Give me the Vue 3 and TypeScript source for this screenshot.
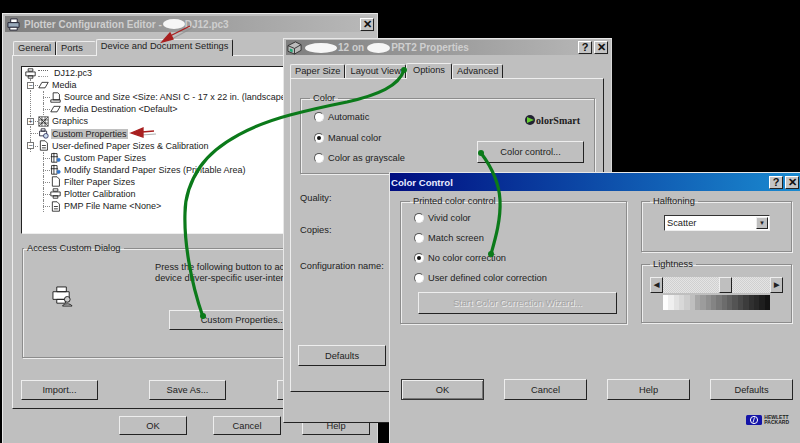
<script setup lang="ts">
interface TreeRow {
  label: string
  indent: number
  icon: string
  box?: string
  selected?: boolean
  through?: boolean
}

const treeRows: TreeRow[] = [
  { label: 'DJ12.pc3', indent: 0, icon: 'printer' },
  { label: 'Media', indent: 1, icon: 'sheet', box: '−' },
  { label: 'Source and Size <Size: ANSI C - 17 x 22 in. (landscape)', indent: 2, icon: 'tray', through: true },
  { label: 'Media Destination <Default>', indent: 2, icon: 'sheet', through: true },
  { label: 'Graphics', indent: 1, icon: 'grid', box: '+' },
  { label: 'Custom Properties', indent: 1, icon: 'custom', selected: true },
  { label: 'User-defined Paper Sizes & Calibration', indent: 1, icon: 'doc', box: '−' },
  { label: 'Custom Paper Sizes', indent: 2, icon: 'size' },
  { label: 'Modify Standard Paper Sizes (Printable Area)', indent: 2, icon: 'size' },
  { label: 'Filter Paper Sizes', indent: 2, icon: 'page' },
  { label: 'Plotter Calibration', indent: 2, icon: 'printer' },
  { label: 'PMP File Name <None>', indent: 2, icon: 'doc' },
]

const colorModes = [
  { label: 'Automatic', on: false },
  { label: 'Manual color', on: true },
  { label: 'Color as grayscale', on: false },
]
const corrections = [
  { label: 'Vivid color', on: false },
  { label: 'Match screen', on: false },
  { label: 'No color correction', on: true },
  { label: 'User defined color correction', on: false },
]
const ramp = ['#fdfdfd', '#efefef', '#e2e2e2', '#d8d8d8', '#cdcdcd', '#bfbfbf', '#a8a8a8', '#9c9c9c', '#909090', '#848484', '#787878', '#6c6c6c', '#606060', '#545454', '#484848', '#3c3c3c', '#303030', '#282828', '#1e1e1e', '#141414']
</script>

<template>
  <div class="desktop">
    <!-- back window -->
    <section class="win win-editor">
      <header class="title inactive">
        <svg class="title-icon" viewBox="0 0 14 14"><path d="M4 1h7v4H4z" fill="#fff" stroke="#223"/><path d="M1 5h12v5H1z" fill="#9ab" stroke="#223"/><path d="M3 10h8v3H3z" fill="#fff" stroke="#223"/></svg>
        <span>Plotter Configuration Editor -</span><i class="blot b1"></i><span class="after-blot">DJ12.pc3</span>
        <span class="title-btns"><b class="cap">✕</b></span>
      </header>
      <nav class="tabs">
        <span class="tab">General</span>
        <span class="tab">Ports</span>
        <span class="tab active">Device and Document Settings</span>
      </nav>
      <div class="panel">
        <ul class="tree">
          <li v-for="row in treeRows" :key="row.label" class="tree-row" :class="[`lvl${row.indent}`, { through: row.through }]">
            <span v-if="row.box" class="box">{{ row.box }}</span>
            <svg class="tree-icon" viewBox="0 0 14 14" fill="#fff" stroke="#111">
              <template v-if="row.icon === 'printer'"><path d="M4 1h6v3H4zM1 5h12v5H1zM4 10h6v3H4z"/></template>
              <template v-else-if="row.icon === 'sheet'"><path d="M5 3h8L9 10H1z"/></template>
              <template v-else-if="row.icon === 'tray'"><path d="M4 1h6l2 2v7H4zM1 10h12v3H1z"/></template>
              <template v-else-if="row.icon === 'grid'"><path d="M1 1h12v12H1zM1 1l12 12M13 1L1 13M5 1v12M9 1v12M1 5h12M1 9h12" stroke-width=".8"/></template>
              <template v-else-if="row.icon === 'custom'"><path d="M2 4h9v6H2zM4 1h5v3H4z" stroke="#112"/><circle cx="10" cy="10" r="3" fill="#cde" stroke="#225"/></template>
              <template v-else-if="row.icon === 'doc'"><path d="M3 1h6l3 3v9H3zM5 7h5M5 10h5"/></template>
              <template v-else-if="row.icon === 'size'"><path d="M2 2h7v11H2zM5 1v12M1 6h9"/><circle cx="11" cy="10" r="2" fill="#37c" stroke="#37c"/></template>
              <template v-else><path d="M3 1h6l3 3v9H3z"/></template>
            </svg>
            <i v-if="row.indent === 0" class="smudge"></i>
            <span class="tree-label" :class="{ selected: row.selected }">{{ row.label }}</span>
          </li>
        </ul>
        <fieldset class="group access">
          <legend>Access Custom Dialog</legend>
          <div class="access-body">
            <svg class="access-icon" viewBox="0 0 22 22" fill="#fff" stroke="#222"><path d="M5 1h10v5H5zM1 6h17v8H1zM5 14h9v4H5z"/><circle cx="16" cy="14" r="3" fill="#ccc"/><path d="M11 21c1-3 9-3 10 0z" fill="#ccc"/></svg>
            <div class="access-main">
              <p>Press the following button to access<br>device driver-specific user-interface</p>
              <button class="btn custom-btn">Custom Properties...</button>
            </div>
          </div>
        </fieldset>
        <div class="editor-row">
          <button class="btn">Import...</button>
          <button class="btn">Save As...</button>
          <button class="btn">Defaults</button>
        </div>
      </div>
      <footer class="editor-foot">
        <button class="btn">OK</button>
        <button class="btn">Cancel</button>
        <button class="btn">Help</button>
      </footer>
    </section>

    <!-- middle window -->
    <section class="win win-props">
      <header class="title inactive">
        <svg class="title-icon" viewBox="0 0 16 16"><path d="M1 6l8-4 6 3v6l-7 4-7-3z" fill="#bbb" stroke="#333"/><path d="M1 6l7 3 7-4M8 9v6" fill="none" stroke="#333"/><path d="M3 9l3 1v3l-3-1z" fill="#2a7"/></svg>
        <i class="blot b2"></i><span class="tight">12 on</span><i class="blot b3"></i><span class="tight">PRT2 Properties</span>
        <span class="title-btns"><b class="cap">?</b><b class="cap">✕</b></span>
      </header>
      <nav class="tabs">
        <span class="tab">Paper Size</span>
        <span class="tab">Layout View</span>
        <span class="tab active">Options</span>
        <span class="tab">Advanced</span>
      </nav>
      <div class="panel">
        <fieldset class="group color-group">
          <legend>Color</legend>
          <div class="color-body">
            <div class="radios">
              <label v-for="m in colorModes" :key="m.label" class="radio"><i class="dot" :class="{ on: m.on }"></i>{{ m.label }}</label>
            </div>
            <div class="color-side">
              <div class="smart"><svg viewBox="0 0 12 12"><circle cx="6" cy="6" r="5" fill="#223"/><path d="M3 3l7 3-7 3z" fill="#6c3"/></svg><span>olorSmart</span></div>
              <button class="btn color-btn">Color control...</button>
            </div>
          </div>
        </fieldset>
        <div class="form-labels">
          <span>Quality:</span>
          <span>Copies:</span>
          <span>Configuration name:</span>
        </div>
        <button class="btn props-default">Defaults</button>
      </div>
    </section>

    <!-- front window -->
    <section class="win win-color">
      <header class="title active-title">
        <span>Color Control</span>
        <span class="title-btns"><b class="cap">?</b><b class="cap">✕</b></span>
      </header>
      <div class="color-top">
        <fieldset class="group printed">
          <legend>Printed color control</legend>
          <label v-for="c in corrections" :key="c.label" class="radio"><i class="dot" :class="{ on: c.on }"></i>{{ c.label }}</label>
          <button class="btn wizard" disabled>Start Color Correction Wizard...</button>
        </fieldset>
        <div class="color-right">
          <fieldset class="group half">
            <legend>Halftoning</legend>
            <div class="select"><span>Scatter</span><b class="arrow">▼</b></div>
          </fieldset>
          <fieldset class="group light">
            <legend>Lightness</legend>
            <div class="scroll"><b class="sb">◀</b><div class="track"><i class="thumb"></i></div><b class="sb">▶</b></div>
            <div class="ramp"><i v-for="(c, i) in ramp" :key="i" :style="{ background: c }"></i></div>
          </fieldset>
        </div>
      </div>
      <div class="color-buttons">
        <button class="btn default">OK</button>
        <button class="btn">Cancel</button>
        <button class="btn">Help</button>
        <button class="btn">Defaults</button>
      </div>
      <div class="hp">
        <svg viewBox="0 0 16 10"><rect width="16" height="10" rx="1.5" fill="#1414a8"/><circle cx="8" cy="5" r="3.6" fill="none" stroke="#fff"/><path d="M7 7.5l1.5-5" stroke="#fff" stroke-width=".9"/></svg>
        <span>HEWLETT<br>PACKARD</span>
      </div>
    </section>

    <!-- annotations over everything -->
    <svg class="notes" viewBox="0 0 800 443">
      <g fill="none" stroke="#0b7a1a" stroke-width="3.2" stroke-linecap="round">
        <path d="M404 70C399 86 378 95 347 102C327 106 309 110 290 115C256 124 218 141 200 167C190 182 185 198 185 213C184 240 190 280 203 317"/>
        <path d="M481 153C490 165 499 180 500 200C501 220 495 240 491 254"/>
      </g>
      <g fill="#0b7a1a"><circle cx="404" cy="70" r="3"/><circle cx="481" cy="153" r="3"/><circle cx="491" cy="254" r="3"/><circle cx="203" cy="316" r="3"/></g>
      <g fill="none" stroke="#8e8e8e" stroke-width="1.2" opacity=".7">
        <path d="M170 40L192 28"/>
        <path d="M141 135L156 134"/>
      </g>
      <g fill="#a81f1f" stroke="#a81f1f" stroke-width="1.3">
        <path d="M168 37L190 26" fill="none"/>
        <path d="M142 132L154 131" fill="none"/>
        <path d="M162 42L170 33L173 39Z"/>
        <path d="M131 133L143 128L143 137Z"/>
      </g>
    </svg>
  </div>
</template>

<style>
html, body { margin: 0; background: #000; }
</style>

<style scoped>
.desktop {
  position: relative;
  width: 800px;
  height: 443px;
  overflow: hidden;
  background: #000;
  font-family: "Liberation Sans", Arial, sans-serif;
  font-size: 9.3px;
  color: #222;
}
.win {
  position: absolute;
  box-sizing: border-box;
  background: #bfbfbf;
  border: 1px solid #e8e8e8;
  border-right-color: #222;
  border-bottom-color: #222;
  padding: 2px;
}
.win-editor { left: 2px; top: 13px; width: 376px; height: 440px; border-right-color: #d8d8d8; }
.win-props { left: 283px; top: 38px; width: 329px; height: 385px; padding-top: 1px; border-right-color: #d8d8d8; }
.win-color { left: 389px; top: 172px; width: 412px; height: 280px; padding: 0; }

.title {
  display: flex;
  align-items: center;
  height: 16px;
  padding: 0 1px 0 2px;
  gap: 3px;
  font-size: 10px;
  font-weight: bold;
  color: #cfcfcf;
  white-space: nowrap;
}
.inactive { background: linear-gradient(90deg, #7f7f7f, #b9b9b9); }
.active-title { background: linear-gradient(90deg, #000d80, #1a8ad0); color: #e8ecff; height: 18px; padding: 0 1px; font-size: 9.6px; }
.win-editor .title-icon { width: 13px; height: 13px; margin-right: 1px; }
.title-icon { width: 15px; height: 15px; flex: none; }
.win-props .title { height: 15px; padding-left: 1px; }
.title-btns { margin-left: auto; display: flex; gap: 2px; }
.cap {
  display: flex;
  align-items: center;
  justify-content: center;
  box-sizing: border-box;
  width: 14px;
  height: 13px;
  background: #c4c4c4;
  border: 1px solid;
  border-color: #fff #222 #222 #fff;
  color: #111;
  font-size: 11px;
  line-height: 1;
}
.blot { display: block; background: #f6f6f6; border-radius: 50%; height: 10px; flex: none; }
.b1 { width: 22px; margin-left: -2px; }
.after-blot { margin-left: -3px; }
.b2 { width: 32px; }
.b3 { width: 23px; }
.tight { margin-left: -2px; }

.tabs { display: flex; align-items: flex-end; height: 23px; padding-left: 8px; }
.win-props .tabs { padding-left: 4px; }
.tab {
  box-sizing: border-box;
  height: 14px;
  padding: 0 4px;
  border: 1px solid #eee;
  border-bottom: 0;
  border-right-color: #222;
  border-radius: 2px 2px 0 0;
  line-height: 13px;
  white-space: nowrap;
}
.tab.active { height: 16px; margin-bottom: -1px; padding: 0 6px; position: relative; background: #bfbfbf; }
.win-editor .tab:nth-child(2) { padding-right: 12px; border-right-color: transparent; }
.win-editor .tab.active { height: 17px; padding: 0 4px; }

.panel {
  box-sizing: border-box;
  border: 1px solid #eee;
  border-right-color: #222;
  border-bottom-color: #222;
  margin-left: 7px;
  padding: 10px 8px;
}
.win-editor .panel { height: 354px; width: 357px; }
.win-props .panel { height: 314px; width: 314px; margin-left: 4px; padding: 14px 9px 0; }

.tree {
  box-sizing: border-box;
  list-style: none;
  margin: 0;
  padding: 0;
  height: 168px;
  background: #fff;
  border: 1px solid;
  border-color: #222 #eee #eee #222;
  font-size: 9px;
}
.tree-row { position: relative; display: flex; align-items: center; height: 12.1px; white-space: nowrap; color: #222; }
.lvl0 { padding-left: 3px; }
.lvl1 { padding-left: 16px; }
.lvl1:has(.box) { padding-left: 5px; }
.lvl2 { padding-left: 28px; }
.lvl1::before, .lvl2::before {
  content: "";
  position: absolute;
  left: 8px;
  top: 0;
  bottom: 0;
  border-left: 1px dotted #888;
}
.lvl1::after, .lvl2::after {
  content: "";
  position: absolute;
  left: 8px;
  top: 6px;
  width: 8px;
  border-top: 1px dotted #888;
}
.lvl2::before { left: 21px; }
.lvl2::after { left: 21px; width: 7px; }
.through { background: repeating-linear-gradient(#888 0 1px, transparent 1px 2px) 8px 0 / 1px 100% no-repeat; }
.box {
  position: relative;
  z-index: 1;
  box-sizing: border-box;
  display: flex;
  align-items: center;
  justify-content: center;
  flex: none;
  width: 7px;
  height: 7px;
  background: #fff;
  border: 1px solid #777;
  font-size: 7px;
  line-height: 1;
  margin-right: 4px;
}
.tree-icon { position: relative; z-index: 1; width: 11px; height: 11px; flex: none; margin-right: 2px; }
.smudge { width: 10px; height: 5px; margin: 0 5px 0 0; border-top: 1px dotted #666; border-bottom: 1px dotted #999; }
.tree-label { padding: 0 1px; }
.tree-label.selected { background: #c0c0c0; }

.group {
  box-sizing: border-box;
  margin: 0;
  padding: 0;
  min-width: 0;
  border: 1px solid #8c8c8c;
  box-shadow: 1px 1px 0 #eee, inset 1px 1px 0 #eee;
}
.group legend { padding: 0 3px; margin-left: 1px; line-height: 11px; color: #222; }
.access { margin-top: 9px; height: 115px; width: 340px; margin-left: 1px; }
.access-body { display: flex; padding: 8px 0 0 29px; }
.access-icon { width: 21px; height: 21px; margin-top: 24px; flex: none; }
.access-main { margin-left: 82px; white-space: nowrap; }
.access-main p { margin: 0 0 26px; line-height: 11px; }
.custom-btn { width: 148px; height: 20px; margin-left: 14px; }

.btn {
  box-sizing: border-box;
  display: block;
  height: 20px;
  padding: 0;
  background: #bfbfbf;
  border: 1px solid;
  border-color: #eee #222 #222 #eee;
  font: 9.3px "Liberation Sans", Arial, sans-serif;
  color: #222;
}
.btn.default { border-color: #333; box-shadow: inset 1px 1px 0 #eee, inset -1px -1px 0 #777; }
.editor-row { display: flex; gap: 51px; margin-top: 22px; }
.editor-row .btn { width: 77px; flex: none; }
.editor-foot { display: flex; gap: 21px; margin: 7px 0 0 114px; }
.editor-foot .btn { width: 68px; height: 19px; }
.editor-foot .btn:first-child { margin-right: 5px; }

.color-group { height: 81px; width: 295px; }
.color-group legend { margin-left: 9px; }
.color-body { display: flex; justify-content: space-between; padding: 0 10px 0 13px; }
.radios { display: flex; flex-direction: column; gap: 6.5px; padding-top: 6px; }
.radio { display: flex; align-items: center; gap: 4px; height: 14px; color: #222; white-space: nowrap; }
.dot {
  box-sizing: border-box;
  width: 10px;
  height: 10px;
  border-radius: 50%;
  background: #fff;
  border: 1px solid #555;
  border-right-color: #eee;
  border-bottom-color: #eee;
  display: flex;
  align-items: center;
  justify-content: center;
}
.dot.on::after { content: ""; width: 4px; height: 4px; border-radius: 50%; background: #111; }
.color-side { display: flex; flex-direction: column; align-items: flex-end; }
.smart { display: flex; align-items: center; font: bold 10px "Liberation Serif", serif; color: #1c1c1c; height: 14px; margin: 9px 4px 14px 0; }
.smart svg { width: 12px; height: 12px; }
.color-btn { width: 107px; height: 22px; }
.form-labels { display: flex; flex-direction: column; margin-top: 19px; }
.form-labels span:nth-child(1) { height: 32px; }
.form-labels span:nth-child(2) { height: 36px; }
.props-default { width: 88px; height: 21px; margin: 74px 0 0 -2px; }

.color-top { display: flex; gap: 14px; padding: 5px 0 0 10px; }
.printed { width: 227px; height: 128px; padding: 1px 0 0 13px; }
.printed legend { margin-left: -4px; }
.printed .radio { height: 20px; }
.wizard { width: 199px; height: 22px; margin: 4px 0 0 4px; color: #a4a4a4; text-shadow: 1px 1px 0 #eee; }
.color-right { display: flex; flex-direction: column; gap: 7px; width: 151px; }
.half { height: 56px; }
.half legend, .light legend { margin-left: 8px; }
.select {
  box-sizing: border-box;
  display: flex;
  align-items: center;
  justify-content: space-between;
  width: 106px;
  height: 16px;
  margin: 8px 0 0 22px;
  background: #fff;
  border: 1px solid;
  border-color: #333 #eee #eee #333;
  padding: 0 1px 0 2px;
}
.arrow {
  width: 12px;
  height: 12px;
  background: #bfbfbf;
  border: 1px solid;
  box-sizing: border-box;
  border-color: #eee #222 #222 #eee;
  font-size: 6px;
  text-align: center;
  line-height: 10px;
}
.light { height: 64px; }
.scroll { display: flex; height: 16px; width: 133px; margin: 7px 0 0 8px; }
.sb {
  box-sizing: border-box;
  width: 13px;
  flex: none;
  background: #bfbfbf;
  border: 1px solid;
  border-color: #eee #222 #222 #eee;
  font-size: 7px;
  line-height: 14px;
  text-align: center;
}
.track {
  flex: 1;
  position: relative;
  background: repeating-conic-gradient(#e4e4e4 0 25%, #d0d0d0 0 50%) 0 0 / 2px 2px;
}
.thumb {
  position: absolute;
  left: 56px;
  top: 0;
  box-sizing: border-box;
  width: 13px;
  height: 16px;
  background: #bfbfbf;
  border: 1px solid;
  border-color: #eee #222 #222 #eee;
}
.ramp { display: flex; height: 15px; width: 107px; margin: 2px 0 0 21px; }
.ramp i { flex: 1; }
.color-buttons { display: flex; gap: 20px; padding: 55px 0 0 11px; }
.color-buttons .btn { width: 83px; height: 21px; }
.hp { display: flex; justify-content: flex-end; align-items: center; gap: 2px; margin-top: 15px; width: 399px; }
.hp svg { width: 16px; height: 10px; }
.hp span { font-size: 5px; line-height: 5px; font-weight: bold; }

.notes { position: absolute; left: 0; top: 0; width: 800px; height: 443px; pointer-events: none; }
</style>
